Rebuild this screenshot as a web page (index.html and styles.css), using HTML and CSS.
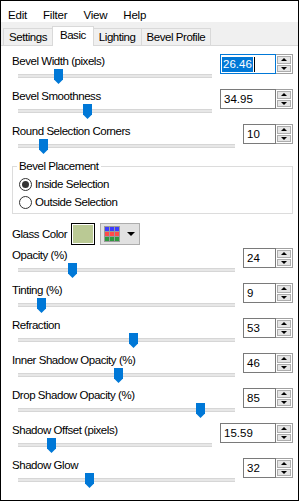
FILE: index.html
```html
<!DOCTYPE html>
<html>
<head>
<meta charset="utf-8">
<link rel="stylesheet" href="styles.css">
</head>
<body>
<div class="window">
  <nav class="menubar">
    <span class="menu-item">Edit</span>
    <span class="menu-item">Filter</span>
    <span class="menu-item">View</span>
    <span class="menu-item">Help</span>
  </nav>
  <div class="tabstrip">
    <div class="tab">Settings</div>
    <div class="tab tab-active">Basic</div>
    <div class="tab">Lighting</div>
    <div class="tab">Bevel Profile</div>
  </div>
  <div class="panel">
    <div class="row">
      <div class="ctl">
        <div class="label">Bevel Width (pixels)</div>
        <div class="slider"><div class="thumb" style="margin-left:36px"></div></div>
      </div>
      <div class="spin">
        <div class="field field-wide field-focus"><span class="sel">26.46</span><span class="caret"></span></div>
        <div class="btns"><div class="btn"><i class="arr-up"></i></div><div class="btn"><i class="arr-down"></i></div></div>
      </div>
    </div>
    <div class="row">
      <div class="ctl">
        <div class="label">Bevel Smoothness</div>
        <div class="slider"><div class="thumb" style="margin-left:65px"></div></div>
      </div>
      <div class="spin">
        <div class="field field-wide">34.95</div>
        <div class="btns"><div class="btn"><i class="arr-up"></i></div><div class="btn"><i class="arr-down"></i></div></div>
      </div>
    </div>
    <div class="row">
      <div class="ctl">
        <div class="label">Round Selection Corners</div>
        <div class="slider"><div class="thumb" style="margin-left:21px"></div></div>
      </div>
      <div class="spin">
        <div class="field">10</div>
        <div class="btns"><div class="btn"><i class="arr-up"></i></div><div class="btn"><i class="arr-down"></i></div></div>
      </div>
    </div>

    <fieldset class="group">
      <legend class="group-title">Bevel Placement</legend>
      <label class="radio-row"><span class="radio radio-on"></span>Inside Selection</label>
      <label class="radio-row"><span class="radio"></span>Outside Selection</label>
    </fieldset>

    <div class="color-row">
      <span class="color-label">Glass Color</span>
      <span class="swatch"></span>
      <span class="palette-btn">
        <svg class="palette-icon" width="16" height="16" viewBox="0 0 16 16">
          <rect x="0" y="0" width="16" height="16" fill="#9a9a9a"/>
          <rect x="1" y="1" width="4" height="4" fill="#3c3cff"/>
          <rect x="6" y="1" width="4" height="4" fill="#3c3cff"/>
          <rect x="11" y="1" width="4" height="4" fill="#3c3cff"/>
          <rect x="1" y="6" width="4" height="4" fill="#ff4a4a"/>
          <rect x="6" y="6" width="4" height="4" fill="#ff4a4a"/>
          <rect x="11" y="6" width="4" height="4" fill="#ff4a4a"/>
          <rect x="1" y="11" width="4" height="4" fill="#2e9a3e"/>
          <rect x="6" y="11" width="4" height="4" fill="#2e9a3e"/>
          <rect x="11" y="11" width="4" height="4" fill="#2e9a3e"/>
        </svg>
        <i class="drop-arrow"></i>
      </span>
    </div>

    <div class="row">
      <div class="ctl">
        <div class="label">Opacity (%)</div>
        <div class="slider"><div class="thumb" style="margin-left:50px"></div></div>
      </div>
      <div class="spin">
        <div class="field">24</div>
        <div class="btns"><div class="btn"><i class="arr-up"></i></div><div class="btn"><i class="arr-down"></i></div></div>
      </div>
    </div>
    <div class="row">
      <div class="ctl">
        <div class="label">Tinting (%)</div>
        <div class="slider"><div class="thumb" style="margin-left:19px"></div></div>
      </div>
      <div class="spin">
        <div class="field">9</div>
        <div class="btns"><div class="btn"><i class="arr-up"></i></div><div class="btn"><i class="arr-down"></i></div></div>
      </div>
    </div>
    <div class="row">
      <div class="ctl">
        <div class="label">Refraction</div>
        <div class="slider"><div class="thumb" style="margin-left:111px"></div></div>
      </div>
      <div class="spin">
        <div class="field">53</div>
        <div class="btns"><div class="btn"><i class="arr-up"></i></div><div class="btn"><i class="arr-down"></i></div></div>
      </div>
    </div>
    <div class="row">
      <div class="ctl">
        <div class="label">Inner Shadow Opacity (%)</div>
        <div class="slider"><div class="thumb" style="margin-left:96px"></div></div>
      </div>
      <div class="spin">
        <div class="field">46</div>
        <div class="btns"><div class="btn"><i class="arr-up"></i></div><div class="btn"><i class="arr-down"></i></div></div>
      </div>
    </div>
    <div class="row">
      <div class="ctl">
        <div class="label">Drop Shadow Opacity (%)</div>
        <div class="slider"><div class="thumb" style="margin-left:178px"></div></div>
      </div>
      <div class="spin">
        <div class="field">85</div>
        <div class="btns"><div class="btn"><i class="arr-up"></i></div><div class="btn"><i class="arr-down"></i></div></div>
      </div>
    </div>
    <div class="row">
      <div class="ctl">
        <div class="label">Shadow Offset (pixels)</div>
        <div class="slider"><div class="thumb" style="margin-left:29px"></div></div>
      </div>
      <div class="spin">
        <div class="field field-wide">15.59</div>
        <div class="btns"><div class="btn"><i class="arr-up"></i></div><div class="btn"><i class="arr-down"></i></div></div>
      </div>
    </div>
    <div class="row">
      <div class="ctl">
        <div class="label">Shadow Glow</div>
        <div class="slider"><div class="thumb" style="margin-left:67px"></div></div>
      </div>
      <div class="spin">
        <div class="field">32</div>
        <div class="btns"><div class="btn"><i class="arr-up"></i></div><div class="btn"><i class="arr-down"></i></div></div>
      </div>
    </div>
  </div>
</div>
</body>
</html>
```
FILE: styles.css
```css
html, body {
  margin: 0;
  padding: 0;
  background: #ffffff;
}
body {
  font-family: "Liberation Sans", Arial, sans-serif;
  font-size: 11.5px;
  letter-spacing: -0.45px;
  color: #000;
}
.window {
  width: 299px;
  height: 501px;
  box-sizing: border-box;
  border: 1px solid #000;
  display: flex;
  flex-direction: column;
  background: #fff;
  overflow: hidden;
}

/* menu */
.menubar {
  display: flex;
  height: 21px;
  box-sizing: border-box;
  padding: 7px 0 0 7px;
  line-height: 14px;
  background: #fff;
}
.menu-item {
  margin-right: 16px;
  letter-spacing: -0.2px;
}

/* tabs */
.tabstrip {
  display: flex;
  align-items: flex-end;
  height: 24px;
  box-sizing: border-box;
  padding-left: 3px;
  background: #f0f0f0;
  border-bottom: 1px solid #d9d9d9;
}
.tab {
  height: 17px;
  box-sizing: border-box;
  padding: 1px 5px;
  margin-left: -1px;
  border: 1px solid #d9d9d9;
  border-bottom: none;
  line-height: 14px;
  background: #f0f0f0;
  white-space: nowrap;
}
.tab-active {
  height: 20px;
  padding: 1px 7px 4px;
  margin-bottom: -1px;
  background: #fff;
  position: relative;
  z-index: 1;
}

/* panel */
.panel {
  flex: 1;
  display: flex;
  flex-direction: column;
  padding: 8px 5px 0 11px;
}
.row {
  display: grid;
  grid-template-columns: 1fr auto;
  column-gap: 8px;
  height: 31px;
  margin-bottom: 4px;
}
.ctl {
  min-width: 0;
}
.label {
  line-height: 14px;
  white-space: nowrap;
}
.slider {
  height: 17px;
  margin-left: 6px;
  display: flex;
  align-items: flex-start;
  background: linear-gradient(to bottom,
    transparent 0, transparent 6px,
    #d6d6d6 6px, #d6d6d6 7px,
    #e7e7e7 7px, #e7e7e7 9px,
    #d6d6d6 9px, #d6d6d6 10px,
    transparent 10px);
}
.thumb {
  flex: none;
  margin-top: 1px;
  width: 9px;
  height: 15px;
  background: #0078d7;
  clip-path: polygon(0 0, 100% 0, 100% 70%, 50% 100%, 0 70%);
}

/* spin box */
.spin {
  display: flex;
  height: 20px;
}
.field {
  width: 33px;
  box-sizing: border-box;
  border: 1px solid #7a7a7a;
  box-shadow: inset 0 0 0 1px #fff;
  padding-left: 3px;
  line-height: 18px;
  display: flex;
  align-items: center;
  letter-spacing: 0;
}
.field-wide {
  width: 56px;
}
.field-focus {
  border-color: #0078d7;
  padding-left: 1px;
}
.sel {
  background: #0078d7;
  color: #fff;
  padding: 0 1px;
  line-height: 15px;
}
.caret {
  width: 1px;
  height: 15px;
  background: #000;
  margin-left: 1px;
}
.btns {
  width: 17px;
  box-sizing: border-box;
  border: 1px solid #a0a0a0;
  border-left: none;
  padding: 1px;
  display: flex;
  flex-direction: column;
  gap: 1px;
  background: #fff;
}
.btn {
  flex: 1;
  background: #e5e5e5;
  border: 1px solid #adadad;
  display: flex;
  align-items: center;
  justify-content: center;
}
.arr-up, .arr-down {
  width: 0;
  height: 0;
  border-left: 3px solid transparent;
  border-right: 3px solid transparent;
}
.arr-up { border-bottom: 3px solid #000; }
.arr-down { border-top: 3px solid #000; }

/* group */
.group {
  margin: 1px 0 0;
  padding: 2px 6px 2px;
  border: 1px solid #dcdcdc;
}
.group-title {
  padding: 0 2px;
  line-height: 13px;
  margin-left: -2px;
}
.radio-row {
  display: flex;
  align-items: center;
  height: 18px;
  line-height: 14px;
}
.radio {
  width: 13px;
  height: 13px;
  box-sizing: border-box;
  border: 1px solid #333;
  border-radius: 50%;
  margin-right: 3px;
  background: #fff;
  display: flex;
  align-items: center;
  justify-content: center;
}
.radio-on::after {
  content: "";
  width: 7px;
  height: 7px;
  border-radius: 50%;
  background: #333;
}

/* color row */
.color-row {
  display: flex;
  align-items: center;
  height: 22px;
  margin-top: 9px;
  margin-bottom: 3px;
}
.color-label {
  width: 59px;
}
.swatch {
  width: 24px;
  height: 22px;
  box-sizing: border-box;
  border: 1px solid #000;
  box-shadow: inset 0 0 0 1px #fff;
  background: #bac994;
}
.palette-btn {
  margin-left: 5px;
  width: 40px;
  height: 22px;
  box-sizing: border-box;
  border: 1px solid #adadad;
  background: #e1e1e1;
  display: flex;
  align-items: center;
  padding-left: 3px;
}
.palette-icon {
  display: block;
}
.drop-arrow {
  margin-left: 7px;
  width: 0;
  height: 0;
  border-left: 4px solid transparent;
  border-right: 4px solid transparent;
  border-top: 4px solid #000;
}
```
